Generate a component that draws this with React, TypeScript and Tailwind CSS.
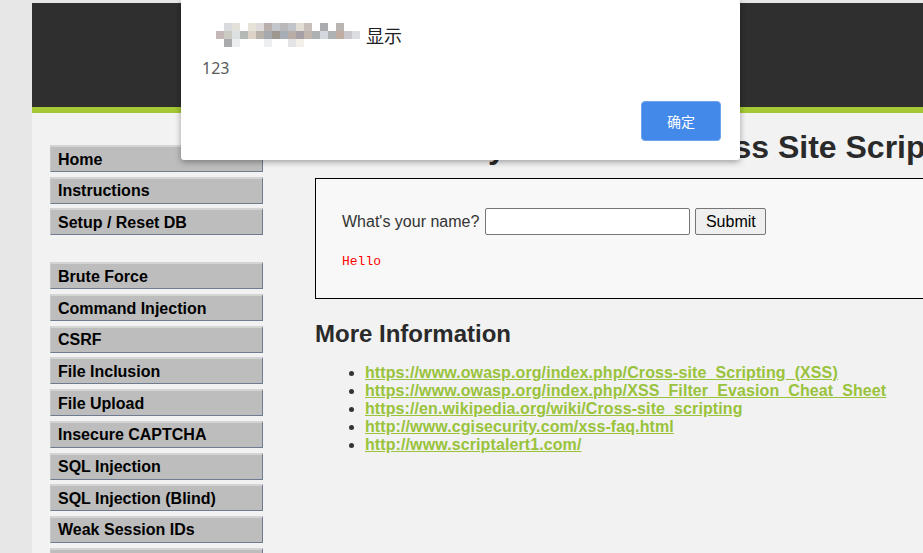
import React from 'react';

const MENU_TOP = ['Home', 'Instructions', 'Setup / Reset DB'];
const MENU_VULNS = [
  'Brute Force',
  'Command Injection',
  'CSRF',
  'File Inclusion',
  'File Upload',
  'Insecure CAPTCHA',
  'SQL Injection',
  'SQL Injection (Blind)',
  'Weak Session IDs',
  'XSS (DOM)',
];

const LINKS = [
  'https://www.owasp.org/index.php/Cross-site_Scripting_(XSS)',
  'https://www.owasp.org/index.php/XSS_Filter_Evasion_Cheat_Sheet',
  'https://en.wikipedia.org/wiki/Cross-site_scripting',
  'http://www.cgisecurity.com/xss-faq.html',
  'http://www.scriptalert1.com/',
];

// blurred (pixelated) site name in the alert title
const MOSAIC = [
  '#ffffff', '#d9dade', '#e4e1da', '#ffffff', '#e7e2da', '#dfdadb', '#b9b0ad', '#c3c6cb', '#b8b8bb', '#c0c3c8', '#e3ddd3', '#c7c0ba', '#ffffff', '#a9abaf', '#ffffff', '#b8b4b2', '#ffffff', '#ffffff',
  '#c3b8b6', '#cdcac3', '#dde0e1', '#b5b9b5', '#ddd3c6', '#b9b2aa', '#a4aab0', '#9d978f', '#a8aeb5', '#b8ada6', '#a6a0a6', '#c1b6ae', '#aeb1b2', '#d2d8dd', '#aeb2b3', '#c0ada2', '#c9c6cc', '#dcdde0',
  '#ffffff', '#a9aaac', '#eceeef', '#ffffff', '#ffffff', '#ffffff', '#eeeff0', '#ffffff', '#ffffff', '#e4e4e6', '#f4efe8', '#ffffff', '#ffffff', '#ffffff', '#ffffff', '#ffffff', '#ffffff', '#ffffff',
];

function Mosaic() {
  return (
    <svg width="144" height="24" viewBox="0 0 144 24" className="block">
      {MOSAIC.map((c, i) => (
        <rect key={i} x={(i % 18) * 8} y={Math.floor(i / 18) * 8} width="8" height="8" fill={c} />
      ))}
    </svg>
  );
}

function MenuItem({ label }: { label: string }) {
  return (
    <div className="h-[27px] bg-[#bdbdbd] border-t-2 border-t-[#d4d4d4] border-l border-l-[#c8c8c8] border-r border-r-[#6e7b90] border-b border-b-[#6e7b90] pl-[7px] flex items-center text-[16px] font-bold text-black leading-none pt-[1px]">
      {label}
    </div>
  );
}

export default function App() {
  return (
    <div className="relative w-[923px] h-[553px] overflow-hidden bg-[#e7e7e7] pt-[3px] font-['Liberation_Sans',Arial,sans-serif]">
      <div className="ml-[32px] w-[1100px]">
        <div className="h-[110px] bg-[#2f2f2f] border-b-[6px] border-b-[#a4c935]" />
        <div className="flex bg-[#f2f2f2] h-[600px]">
          <div className="w-[213px] ml-[18px] pt-[32px] flex flex-col">
            <div className="flex flex-col gap-[4.7px]">
              {MENU_TOP.map((m) => (
                <MenuItem key={m} label={m} />
              ))}
            </div>
            <div className="flex flex-col gap-[4.7px] mt-[27px]">
              {MENU_VULNS.map((m) => (
                <MenuItem key={m} label={m} />
              ))}
            </div>
          </div>

          <div className="ml-[52px] w-[720px] pt-[16px] text-[#333]">
            <h1 className="text-[32px] font-bold leading-[37px] text-[#2a2a2a] whitespace-nowrap">
              Vulnerability: Reflected Cross Site Scripting (XSS)
            </h1>
            <div className="mt-[12px] h-[121px] border border-black bg-[#f7f8f7] pl-[26px] pt-[29px]">
              <div className="flex items-center text-[16px] text-[#333]">
                <span>What's your name?</span>
                <input className="ml-[6px] w-[205px] h-[27px] border border-[#767676] rounded-[2px] bg-white" />
                <button className="ml-[5px] w-[71px] h-[27px] border border-[#767676] rounded-[2px] bg-[#efefef] text-black text-[16px]">
                  Submit
                </button>
              </div>
              <div className="mt-[19px] font-['Liberation_Mono',monospace] text-[13px] text-[#ff0000] leading-[16px]">
                Hello
              </div>
            </div>

            <h2 className="mt-[21px] text-[24px] font-bold leading-[28px] text-[#2a2a2a]">More Information</h2>
            <ul className="mt-[16px] pl-[50px] list-disc text-[16px] leading-[18px] tracking-[0.1px] marker:text-[#333]">
              {LINKS.map((l) => (
                <li key={l}>
                  <a className="font-bold text-[#99c33b] underline">{l}</a>
                </li>
              ))}
            </ul>
          </div>
        </div>
      </div>

      <div className="absolute left-[181px] top-0 w-[559px] h-[160px] bg-white rounded-b-[3px] shadow-[0_2px_6px_rgba(0,0,0,0.35)] font-['Noto_Sans','Noto_Sans_CJK_SC',sans-serif]">
        <div className="flex items-center pl-[35px] pt-[23px]">
          <Mosaic />
          <span className="ml-[6px] text-[18px] text-[#202124] leading-none font-['Noto_Sans_CJK_SC',sans-serif]">显示</span>
        </div>
        <div className="pl-[21px] mt-[10px] text-[16px] text-[#5a5a5a] leading-[22px]">123</div>
        <div className="flex justify-end pr-[19px] mt-[22px]">
          <button className="w-[80px] h-[40px] rounded-[4px] bg-[#4289e9] border border-[#6ea2ef] text-white text-[14px] font-['Noto_Sans_CJK_SC',sans-serif]">
            确定
          </button>
        </div>
      </div>
    </div>
  );
}
